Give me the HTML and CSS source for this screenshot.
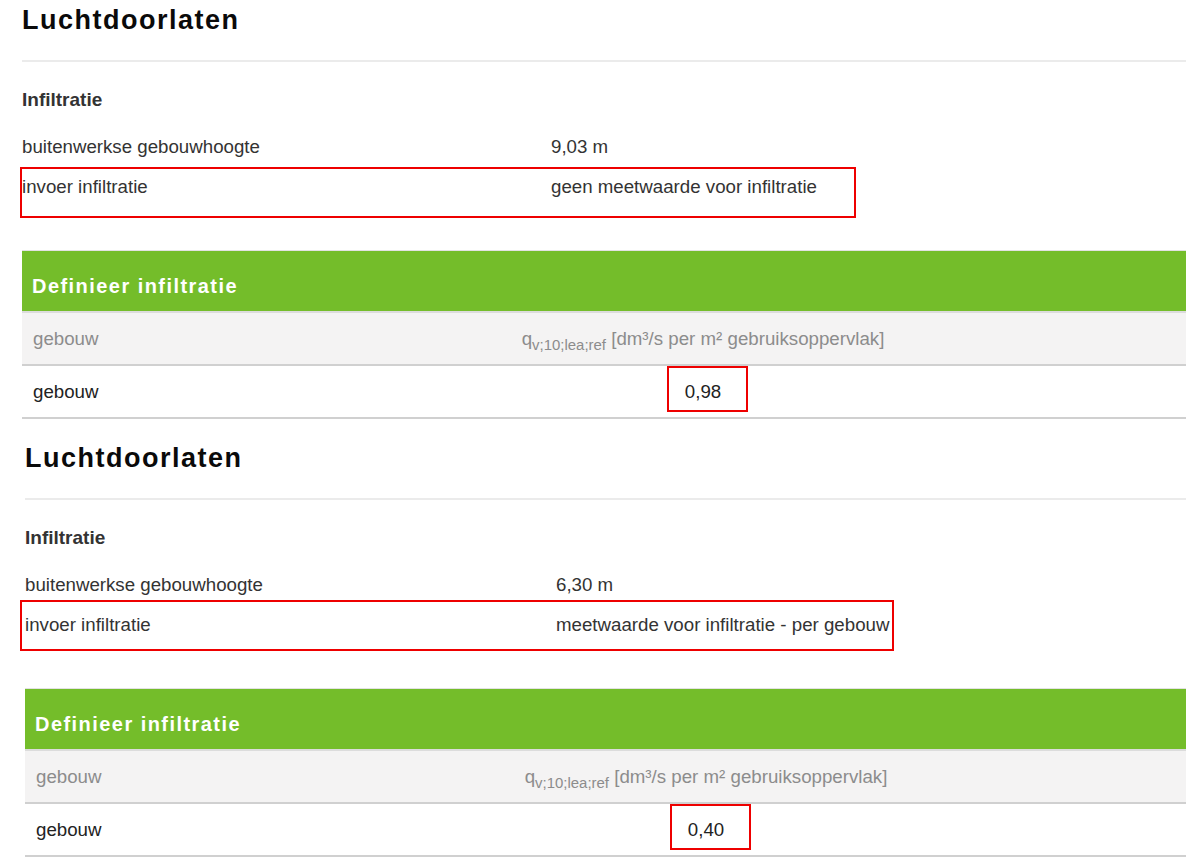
FILE: index.html
```html
<!DOCTYPE html>
<html lang="nl">
<head>
<meta charset="utf-8">
<title>Luchtdoorlaten</title>
<link rel="stylesheet" href="styles.css">
</head>
<body>
  <section class="section s1">
    <h1 class="title">Luchtdoorlaten</h1>
    <div class="divider"></div>
    <h2 class="subtitle">Infiltratie</h2>
    <div class="row">
      <span class="label">buitenwerkse gebouwhoogte</span>
      <span class="value">9,03 m</span>
    </div>
    <div class="row marked mark-a">
      <span class="label">invoer infiltratie</span>
      <span class="value">geen meetwaarde voor infiltratie</span>
    </div>
    <div class="tbl">
      <div class="tbl-title">Definieer infiltratie</div>
      <div class="tbl-head">
        <div class="cell">gebouw</div>
        <div class="cell center">q<sub>v;10;lea;ref</sub> [dm³/s per m² gebruiksoppervlak]</div>
      </div>
      <div class="tbl-row">
        <div class="cell">gebouw</div>
        <div class="cell center"><span class="val">0,98</span></div>
      </div>
    </div>
  </section>

  <section class="section s2">
    <h1 class="title">Luchtdoorlaten</h1>
    <div class="divider"></div>
    <h2 class="subtitle">Infiltratie</h2>
    <div class="row">
      <span class="label">buitenwerkse gebouwhoogte</span>
      <span class="value">6,30 m</span>
    </div>
    <div class="row marked mark-b">
      <span class="label">invoer infiltratie</span>
      <span class="value">meetwaarde voor infiltratie - per gebouw</span>
    </div>
    <div class="tbl">
      <div class="tbl-title">Definieer infiltratie</div>
      <div class="tbl-head">
        <div class="cell">gebouw</div>
        <div class="cell center">q<sub>v;10;lea;ref</sub> [dm³/s per m² gebruiksoppervlak]</div>
      </div>
      <div class="tbl-row">
        <div class="cell">gebouw</div>
        <div class="cell center"><span class="val">0,40</span></div>
      </div>
    </div>
  </section>
</body>
</html>
```

FILE: styles.css
```css
html, body {
  margin: 0;
  padding: 0;
  overflow: hidden;
  background: #ffffff;
}

body {
  font-family: "Liberation Sans", Arial, Helvetica, sans-serif;
  font-size: 18.7px;
  color: #333333;
  width: 1186px;
  height: 867px;
}

.section {
  padding-top: 4px;
  width: 1164px;
}

.s1 {
  margin-left: 22px;
}

.s2 {
  margin-left: 25px;
  margin-top: 19px;
}

.title {
  margin: 0 0 24px 0;
  font-size: 27px;
  line-height: 32px;
  font-weight: bold;
  letter-spacing: 1.5px;
  color: #0a0a0a;
}

.divider {
  height: 2px;
  background: #ebebeb;
}

.subtitle {
  margin: 18px 0 7px 0;
  font-size: 19px;
  line-height: 40px;
  font-weight: bold;
  color: #333333;
}

.row {
  position: relative;
  display: grid;
  grid-template-columns: 529px auto;
  line-height: 40px;
  height: 40px;
}

.s2 .row {
  grid-template-columns: 531px auto;
}

.marked::after {
  content: "";
  position: absolute;
  border: 2px solid #ee0000;
  box-sizing: border-box;
}

.mark-a::after {
  left: -2px;
  width: 836px;
  top: 0;
  bottom: -11px;
}

.mark-b::after {
  left: -5px;
  width: 874px;
  top: -5px;
  bottom: -6px;
}

.tbl {
  margin-top: 43px;
  width: 1164px;
}

.tbl-title {
  border-top: 1px solid #e2e2e2;
  border-bottom: 2px solid #dcdcdc;
  background: #74bd2a;
  color: #ffffff;
  font-size: 20px;
  font-weight: bold;
  letter-spacing: 1.45px;
  line-height: 49px;
  padding: 11px 0 0 10px;
}

.tbl-head,
.tbl-row {
  display: grid;
  grid-template-columns: 198px 1fr;
  height: 51px;
  line-height: 51px;
  border-bottom: 2px solid #d0d0d0;
}

.tbl-head {
  background: #f4f3f3;
  color: #8c8c8c;
}

.tbl-row {
  background: #ffffff;
  color: #222222;
}

.cell {
  padding-left: 11px;
  white-space: nowrap;
}

.cell.center {
  padding-left: 0;
  text-align: center;
}

.cell sub {
  font-size: 0.8em;
  line-height: 0;
}

.val {
  position: relative;
  display: inline-block;
}

.val::after {
  content: "";
  position: absolute;
  left: -18px;
  right: -27px;
  top: 0;
  bottom: 5px;
  border: 2px solid #ee0000;
  box-sizing: border-box;
}
```
